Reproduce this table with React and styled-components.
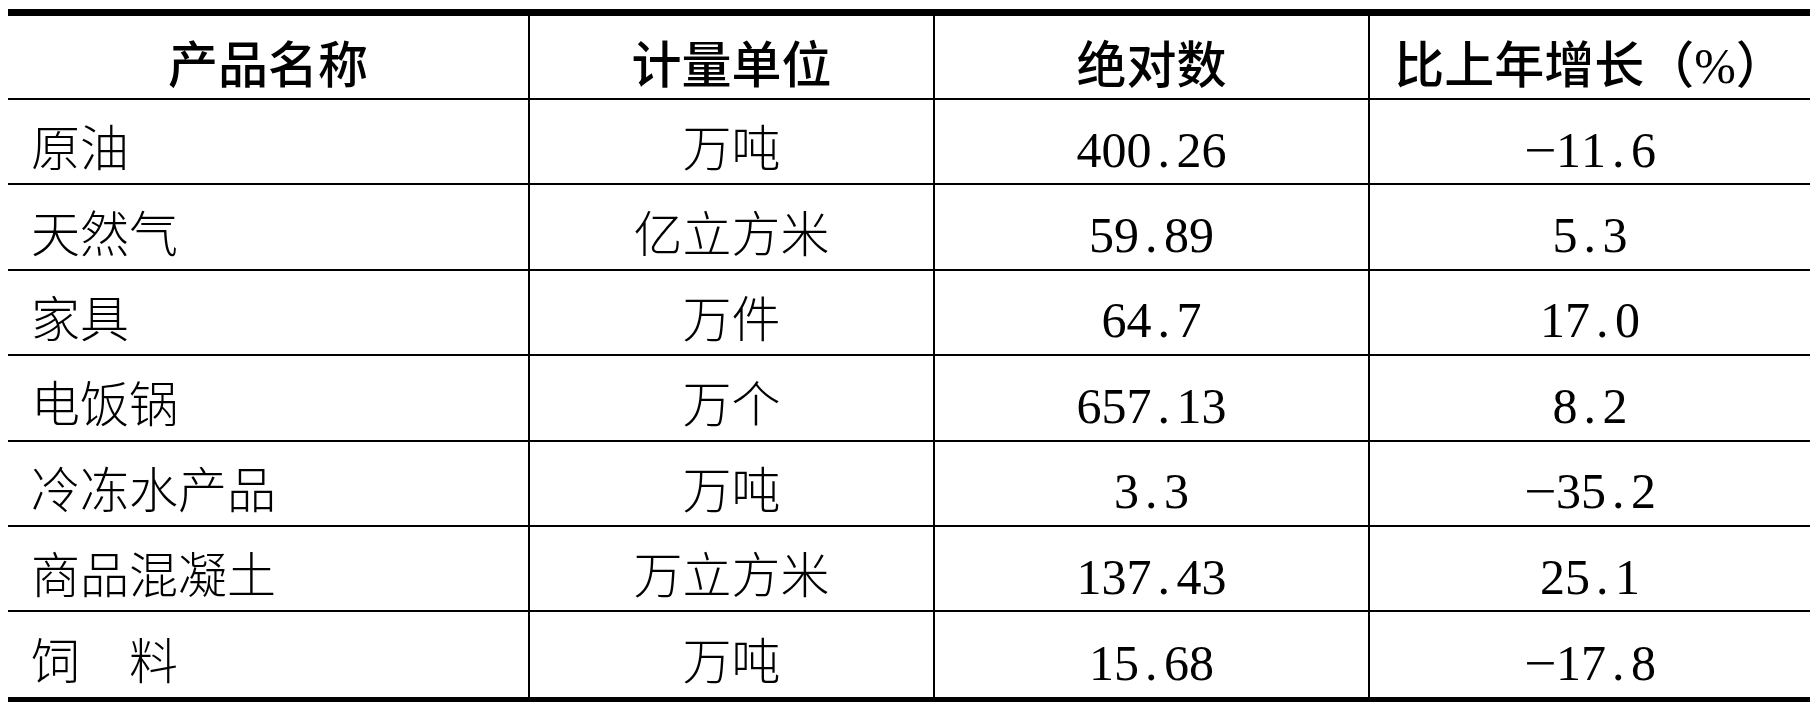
import React from "react"
import styled, { createGlobalStyle } from "styled-components"

const GlobalStyle = createGlobalStyle`
  html, body {
    margin: 0;
    padding: 0;
    overflow: hidden;
    background: #fff;
  }
  body {
    padding: 9px 0 0 8px;
  }
`

const Table = styled.div`
  display: grid;
  grid-template-columns: 520px 405px 435px 442px;
  grid-template-rows: 84px repeat(6, 85.4px) 85px;
  width: 1802px;
  border-top: 7px solid #000;
  border-bottom: 6px solid #000;
  color: #000;
  font-family: "Liberation Serif", "Noto Sans CJK SC", serif;
`

const Cell = styled.div`
  box-sizing: border-box;
  display: flex;
  align-items: center;
  justify-content: ${p => (p.$left ? "flex-start" : "center")};
  padding: ${p => (p.$head ? "18px 0 0" : "16px 0 0")};
  padding-left: ${p => (p.$left ? "23px" : "0")};
  border-left: ${p => (p.$col > 0 ? "2px solid #000" : "none")};
  border-bottom: ${p => (p.$last ? "none" : "2px solid #000")};
  font-size: ${p => (p.$head ? "50px" : "49px")};
  font-weight: ${p => (p.$head ? 500 : 300)};
  line-height: 1;
  white-space: pre;
`

const Num = styled.span`
  font-family: "Liberation Serif", serif;
  font-size: 50px;
  font-weight: 400;
  display: inline-flex;
  align-items: baseline;
`

const Dot = styled.span`
  display: inline-block;
  width: 0.5em;
  padding-left: 0.12em;
  box-sizing: border-box;
`

const Minus = styled.span`
  display: inline-block;
  width: 0.64em;
  transform: scaleX(1.15);
  transform-origin: left center;
`

const header = ["产品名称", "计量单位", "绝对数", "比上年增长（%）"]

const rows = [
  ["原油", "万吨", "400.26", "-11.6"],
  ["天然气", "亿立方米", "59.89", "5.3"],
  ["家具", "万件", "64.7", "17.0"],
  ["电饭锅", "万个", "657.13", "8.2"],
  ["冷冻水产品", "万吨", "3.3", "-35.2"],
  ["商品混凝土", "万立方米", "137.43", "25.1"],
  ["饲\u3000料", "万吨", "15.68", "-17.8"],
]

const Figure = ({ value }) => (
  <Num>
    {value.split("").map((ch, i) =>
      ch === "." ? (
        <Dot key={i}>.</Dot>
      ) : ch === "-" ? (
        <Minus key={i}>−</Minus>
      ) : (
        <span key={i}>{ch}</span>
      )
    )}
  </Num>
)

const App = () => (
  <>
    <GlobalStyle />
    <Table>
      {header.map((h, c) => (
        <Cell key={h} $head $col={c}>
          {h}
        </Cell>
      ))}
      {rows.map((r, ri) =>
        r.map((v, c) => (
          <Cell key={ri + "-" + c} $col={c} $left={c === 0} $last={ri === rows.length - 1}>
            {c >= 2 ? <Figure value={v} /> : v}
          </Cell>
        ))
      )}
    </Table>
  </>
)

export default App
